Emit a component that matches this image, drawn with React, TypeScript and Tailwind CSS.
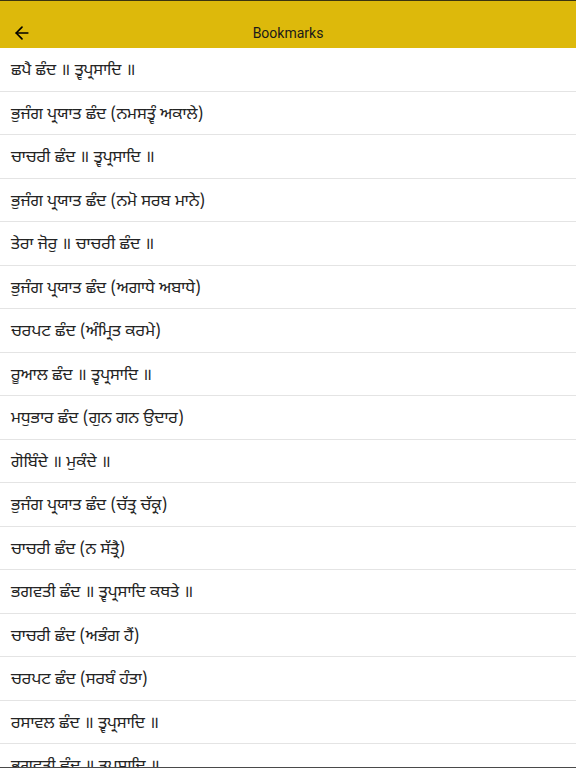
import { ArrowLeft } from "lucide-react";

const BOOKMARKS = [
  "ਛਪੈ ਛੰਦ ॥ ਤ੍ਵਪ੍ਰਸਾਦਿ ॥",
  "ਭੁਜੰਗ ਪ੍ਰਯਾਤ ਛੰਦ (ਨਮਸਤ੍ਵੰ ਅਕਾਲੇ)",
  "ਚਾਚਰੀ ਛੰਦ ॥ ਤ੍ਵਪ੍ਰਸਾਦਿ ॥",
  "ਭੁਜੰਗ ਪ੍ਰਯਾਤ ਛੰਦ (ਨਮੋ ਸਰਬ ਮਾਨੇ)",
  "ਤੇਰਾ ਜੋਰੁ ॥ ਚਾਚਰੀ ਛੰਦ ॥",
  "ਭੁਜੰਗ ਪ੍ਰਯਾਤ ਛੰਦ (ਅਗਾਧੇ ਅਬਾਧੇ)",
  "ਚਰਪਟ ਛੰਦ (ਅੰਮ੍ਰਿਤ ਕਰਮੇ)",
  "ਰੂਆਲ ਛੰਦ ॥ ਤ੍ਵਪ੍ਰਸਾਦਿ ॥",
  "ਮਧੁਭਾਰ ਛੰਦ (ਗੁਨ ਗਨ ਉਦਾਰ)",
  "ਗੋਬਿੰਦੇ ॥ ਮੁਕੰਦੇ ॥",
  "ਭੁਜੰਗ ਪ੍ਰਯਾਤ ਛੰਦ (ਚੱਤ੍ਰ ਚੱਕ੍ਰ)",
  "ਚਾਚਰੀ ਛੰਦ (ਨ ਸੱਤ੍ਰੈ)",
  "ਭਗਵਤੀ ਛੰਦ ॥ ਤ੍ਵਪ੍ਰਸਾਦਿ ਕਥਤੇ ॥",
  "ਚਾਚਰੀ ਛੰਦ (ਅਭੰਗ ਹੈਂ)",
  "ਚਰਪਟ ਛੰਦ (ਸਰਬੰ ਹੰਤਾ)",
  "ਰਸਾਵਲ ਛੰਦ ॥ ਤ੍ਵਪ੍ਰਸਾਦਿ ॥",
  "ਭਗਵਤੀ ਛੰਦ ॥ ਤ੍ਵਪ੍ਰਸਾਦਿ ॥",
];

export default function App() {
  return (
    <div className="relative h-[768px] w-[576px] overflow-hidden bg-white font-['Roboto','Noto_Sans',sans-serif] text-[#222]">
      {/* Header */}
      <header className="flex h-[48px] items-center border-t-[1.5px] border-[#3b3410] bg-[#ddb90b] pt-[17px]">
        <button className="ml-[10px] flex h-6 w-6 items-center justify-center text-black">
          <ArrowLeft size={20} strokeWidth={2} />
        </button>
        <h1 className="flex-1 pr-[34px] text-center text-[14px] text-[#1a1a1a]">Bookmarks</h1>
      </header>

      {/* List */}
      <ul className="font-['Noto_Sans_Gurmukhi','Lohit_Gurmukhi','Raavi','FreeSans','Noto_Sans',sans-serif]">
        {BOOKMARKS.map((b) => (
          <li
            key={b}
            className="flex h-[43.5px] items-center border-b border-[#e4e4e4] pl-[11px] pt-[5px] text-[16.5px] text-[#242424]"
          >
            {b}
          </li>
        ))}
      </ul>

      <div className="absolute bottom-0 left-0 right-0 h-px bg-[#4a4a4a]" />
    </div>
  );
}
